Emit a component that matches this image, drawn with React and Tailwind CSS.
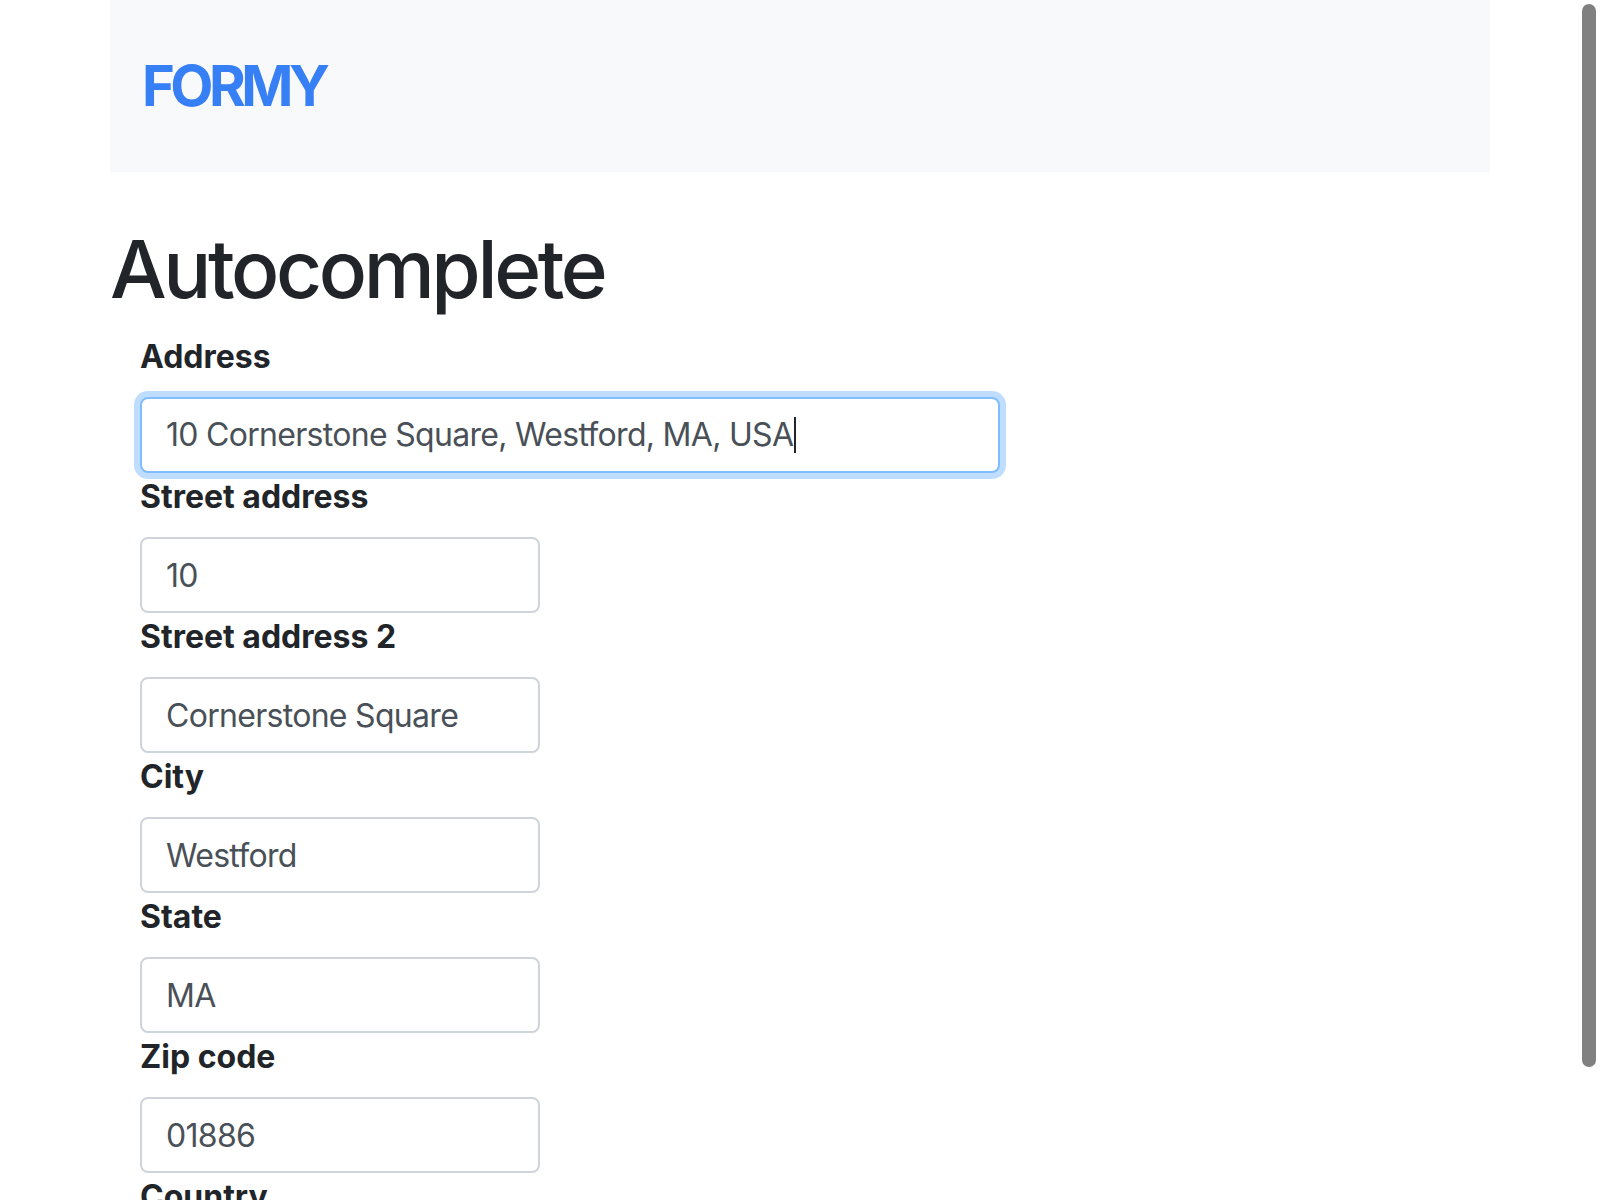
const fields = [
  { label: 'Street address', value: '10' },
  { label: 'Street address 2', value: 'Cornerstone Square' },
  { label: 'City', value: 'Westford' },
  { label: 'State', value: 'MA' },
  { label: 'Zip code', value: '01886' },
];

function Field({ label, value }) {
  return (
    <div className="flex flex-col">
      <label className="mb-4 text-[32px] leading-[48px] font-bold text-[#212529]">{label}</label>
      <input
        readOnly
        value={value}
        className="h-[76px] w-[400px] rounded-lg border-2 border-[#ced4da] bg-white px-6 text-[32px] tracking-[-0.7px] text-[#495057] outline-none"
      />
    </div>
  );
}

export default function App() {
  return (
    <div className="relative h-[1200px] overflow-hidden bg-white font-['Inter',sans-serif]">
      <div className="mx-auto w-[1380px]">
        <nav className="flex h-[172px] items-center bg-[#f8f9fa] px-[32px]">
          <span className="text-[56px] font-bold tracking-[-4.5px] text-[#367ff5]">FORMY</span>
        </nav>

        <h1 className="mt-[49px] mb-4 text-[80px] leading-[96px] font-medium tracking-[-3.4px] text-[#212529]">Autocomplete</h1>

        <form className="flex flex-col px-[30px]">
          <div className="flex flex-col">
            <label className="mb-4 text-[32px] leading-[48px] font-bold text-[#212529]">Address</label>
            <div className="flex h-[76px] w-[860px] items-center rounded-lg border-2 border-[#80bdff] bg-white px-6 text-[32px] tracking-[-0.7px] text-[#495057] shadow-[0_0_0_6px_rgba(0,123,255,0.25)]">
              <span>10 Cornerstone Square, Westford, MA, USA</span>
              <span className="ml-px h-[36px] w-[2px] bg-[#212529]" />
            </div>
          </div>
          {fields.map((f) => (
            <Field key={f.label} label={f.label} value={f.value} />
          ))}
          <div className="flex flex-col">
            <label className="mb-4 text-[32px] leading-[48px] font-bold text-[#212529]">Country</label>
            <input
              readOnly
              value="USA"
              className="h-[76px] w-[400px] rounded-lg border-2 border-[#ced4da] bg-white px-6 text-[32px] tracking-[-0.7px] text-[#495057] outline-none"
            />
          </div>
        </form>
      </div>

      <div className="absolute top-[4px] right-[4px] h-[1063px] w-[14px] rounded-full bg-[#808080]" />
    </div>
  );
}
